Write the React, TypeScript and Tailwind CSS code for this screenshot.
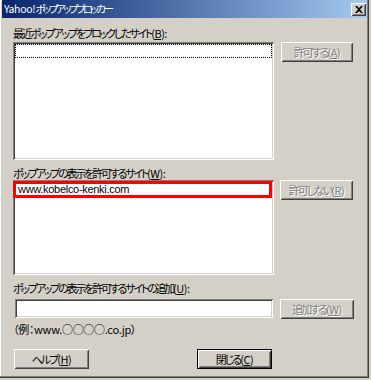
import React from "react";

const font = "[font-family:'Noto_Sans_CJK_JP','Liberation_Sans',sans-serif]";
const sunken =
  "bg-white shadow-[inset_1px_1px_#808080,inset_-1px_-1px_#ffffff,inset_2px_2px_#404040,inset_-2px_-2px_#d4d0c8]";
const raised =
  "bg-[#d4d0c8] shadow-[inset_1px_1px_#ffffff,inset_-1px_-1px_#404040,inset_2px_2px_#d4d0c8,inset_-2px_-2px_#808080]";
const jp = "[letter-spacing:-2.2px] [font-feature-settings:'palt']";

// label: japanese text tight, access key part at normal spacing
function Label({ text, k, className = "" }: { text: string; k: string; className?: string }) {
  return (
    <div className={`text-[11px] leading-[12px] text-black whitespace-nowrap ${className}`}>
      <span className={jp}>{text}</span>
      <span className="[letter-spacing:-0.5px]">
        (<u>{k}</u>):
      </span>
    </div>
  );
}

function Btn({
  text,
  k,
  disabled,
  w,
}: {
  text: string;
  k: string;
  disabled?: boolean;
  w: string;
}) {
  return (
    <button
      className={`${raised} ${w} h-[20px] flex items-center justify-center text-[11px] leading-none ${
        disabled ? "text-[#808080] [text-shadow:1px_1px_0_#ffffff]" : "text-black"
      }`}
    >
      <span className="[letter-spacing:-2px] [font-feature-settings:'palt']">{text}</span>
      <span className="[letter-spacing:-0.5px]">
        (<u>{k}</u>)
      </span>
    </button>
  );
}

export default function App() {
  return (
    <div className={`w-[371px] h-[380px] bg-[#d4d0c8] ${font}`}>
      <div className="w-[369px] h-[378px] flex flex-col shadow-[inset_-1px_-1px_#404040,inset_-2px_-2px_#808080,inset_1px_1px_#ffffff]">
        {/* title bar */}
        <div className="mx-[2px] h-[18px] flex items-center justify-between pl-[2px] pr-[1px] bg-gradient-to-r from-[#0a246a] to-[#a6caf0]">
          <span className="text-white text-[10.5px] leading-none">
            <span className="[letter-spacing:-0.3px]">Yahoo!</span>
            <span className="[letter-spacing:-2.5px] [font-feature-settings:'palt']">ポップアップブロッカー</span>
          </span>
          <span className={`${raised} w-[15px] h-[13px] flex items-center justify-center`}>
            <svg width="8" height="7" viewBox="0 0 8 7">
              <path d="M0 0h2l2 2 2-2h2L5 3.5 8 7H6L4 5 2 7H0l3-3.5z" fill="#000" />
            </svg>
          </span>
        </div>

        <div className="flex flex-col pl-[13px]">
          <Label className="mt-[9px]" text="最近ポップアップをブロックしたサイト" k="B" />
          <div className="flex gap-[7px] mt-[3px]">
            <div className={`${sunken} w-[261px] h-[118px] p-[2px]`}>
              <div className="h-[14px] border border-dotted border-black" />
            </div>
            <Btn disabled w="w-[72px]" text="許可する" k="A" />
          </div>

          <Label className="mt-[7px]" text="ポップアップの表示を許可するサイト" k="W" />
          <div className="flex gap-[6px] mt-[1px]">
            <div className={`${sunken} relative w-[261px] h-[95px]`}>
              <div className="absolute left-0 top-[1px] w-[259px] h-[17px] border-[3px] border-[#ff0000] flex items-center pl-[2px]">
                <span className="text-[11px] leading-none [letter-spacing:-0.3px] text-black [font-family:'Liberation_Sans',sans-serif]">
                  www.kobelco-kenki.com
                </span>
              </div>
            </div>
            <Btn disabled w="w-[73px]" text="許可しない" k="R" />
          </div>

          <Label className="mt-[7px]" text="ポップアップの表示を許可するサイトの追加" k="U" />
          <div className="flex gap-[7px] mt-[5px] pl-[2px]">
            <div className={`${sunken} w-[258px] h-[19px]`} />
            <Btn disabled w="w-[74px]" text="追加する" k="W" />
          </div>

          <div className="mt-[4px] text-[11px] leading-[12px] text-black whitespace-nowrap [letter-spacing:-0.3px] [font-feature-settings:'palt']">
            （例：www.○○○○.co.jp）
          </div>

          <div className="flex mt-[14px] pl-[1px]">
            <Btn w="w-[75px]" text="ヘルプ" k="H" />
            <div className="ml-[108px] w-[75px] h-[20px] border border-black">
              <button
                className={`${raised} w-full h-full flex items-center justify-center text-[11px] leading-none text-black`}
              >
                <span className="[letter-spacing:-2px] [font-feature-settings:'palt']">閉じる</span>
                <span className="[letter-spacing:-0.5px]">
                  (<u>C</u>)
                </span>
              </button>
            </div>
          </div>
        </div>
      </div>
    </div>
  );
}
